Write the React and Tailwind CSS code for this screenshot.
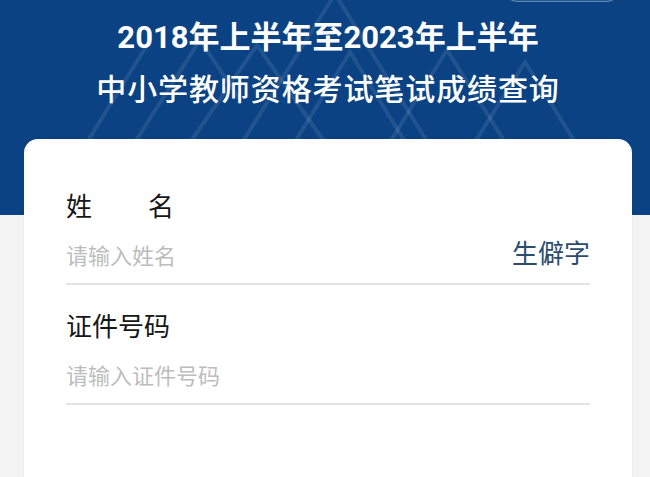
const FONT = { fontFamily: '"Roboto", "Noto Sans CJK SC", sans-serif' };

// faint Λ strokes behind the title
const Peaks = () => (
  <svg
    className="absolute inset-0 h-full w-full"
    viewBox="0 0 650 215"
    preserveAspectRatio="none"
    fill="none"
    stroke="rgba(255,255,255,0.09)"
    strokeWidth="4"
  >
    <polyline points="225,170 335,-6 445,170" />
    <polyline points="185,150 257,45 330,150" />
    <polyline points="290,150 350,52 410,150" />
    <polyline points="385,150 447,50 510,150" />
    <polyline points="470,150 525,62 580,150" />
    <polyline points="70,170 150,40" />
    <polyline points="130,150 200,40 240,100" />
  </svg>
);

const Field = ({ label, placeholder, extra }) => (
  <div>
    <div className="h-[36px] text-[26px] leading-[36px] text-[#161616]">{label}</div>
    <div className="flex h-[58px] items-center justify-between">
      <input
        placeholder={placeholder}
        className="mt-[6px] w-[300px] bg-transparent text-[22px] leading-[30px] text-[#222] outline-none placeholder:text-[#bdbdbd]"
        style={FONT}
      />
      {extra}
    </div>
    <div className="h-[2px] bg-[#e2e2e2]" />
  </div>
);

export default function App() {
  return (
    <div className="min-h-[477px] overflow-hidden bg-[#f3f3f3]" style={FONT}>
      <div className="relative h-[215px] overflow-hidden bg-[#0b4283]">
        <Peaks />
        <div className="absolute right-[28px] top-[-30px] h-[32px] w-[120px] rounded-full border border-white/30 bg-white/10" />
        <div className="relative ml-[6px] pt-[12px] text-center text-white">
          <div className="text-[31px] font-bold leading-[52px]">2018年上半年至2023年上半年</div>
          <div className="text-[30px] font-medium leading-[52px] tracking-[0.9px]">
            中小学教师资格考试笔试成绩查询
          </div>
        </div>
      </div>

      <div className="relative ml-[24px] mr-[18px] -mt-[76px] h-[360px] rounded-t-[14px] bg-white px-[42px] pt-[50px] shadow-[0_0_4px_rgba(0,0,0,0.04)]">
        <Field
          label={
            <span className="flex w-[108px] justify-between">
              <span>姓</span>
              <span>名</span>
            </span>
          }
          placeholder="请输入姓名"
          extra={<span className="text-[26px] text-[#2c4c6e]">生僻字</span>}
        />
        <div className="h-[24px]" />
        <Field label="证件号码" placeholder="请输入证件号码" />
      </div>
    </div>
  );
}
